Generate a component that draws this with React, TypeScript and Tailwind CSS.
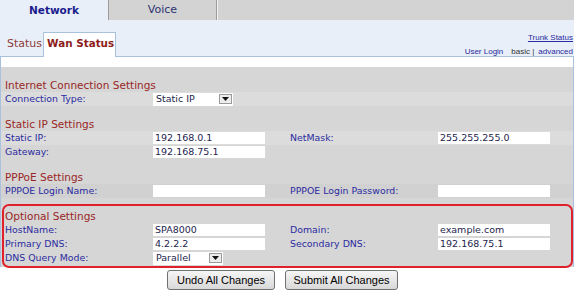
import React from "react";

const LABEL = "text-[9.4px] text-[#2b2ba0] leading-[14px] whitespace-nowrap";
const HEAD = "h-[13px] pl-[4px] text-[10.5px] leading-[13px] text-[#992626] whitespace-nowrap";

function Input({ value = "" }: { value?: string }) {
  return (
    <div className="w-[112px] h-[12px] bg-white text-[9.5px] leading-[12px] pl-[2px] text-[#1e1e4e] whitespace-nowrap overflow-hidden">
      {value}
    </div>
  );
}

function Select({ value, w }: { value: string; w: string }) {
  return (
    <div className={`${w} h-[13px] bg-white flex items-center justify-between pl-[3px] pr-[1px]`}>
      <span className="text-[9.5px] leading-[12px] text-[#1e1e4e]">{value}</span>
      <span className="w-[13px] h-[10px] bg-[#ececec] border border-[#9a9a9a] flex items-center justify-center">
        <svg width="7" height="4" viewBox="0 0 7 4">
          <path d="M0 0 H7 L3.5 4 Z" fill="#111" />
        </svg>
      </span>
    </div>
  );
}

function Field({ l1, c1, l2, c2 }: { l1: string; c1: React.ReactNode; l2?: string; c2?: React.ReactNode }) {
  return (
    <div className="grid grid-cols-[148px_137px_148px_1fr] pl-[4px] h-[14px] items-center">
      <span className={LABEL}>{l1}</span>
      <div>{c1}</div>
      <span className={LABEL}>{l2 ?? ""}</span>
      <div>{c2}</div>
    </div>
  );
}

function Blank() {
  return <div className="h-[12px]" />;
}

export default function App() {
  return (
    <div className="w-[575px] h-[291px] bg-white font-['DejaVu_Sans',sans-serif] relative overflow-hidden">
      {/* Top tabs */}
      <div className="flex h-[20px] w-[574px]">
        <div className="w-[108px] bg-[#e8eff8] text-center font-bold text-[10.5px] leading-[20px] text-[#1c1c8e]">
          Network
        </div>
        <div className="w-[1px] bg-[#9c9c9c]" />
        <div className="w-[107px] bg-[#d3d3d3] text-center text-[11px] leading-[20px] text-[#2c3470]">Voice</div>
        <div className="w-[1px] bg-[#9c9c9c]" />
        <div className="w-[1px] bg-[#f2f2f2]" />
        <div className="flex-1 bg-[#d3d3d3]" />
      </div>

      {/* Sub header */}
      <div className="flex items-end h-[37px] w-[574px] bg-[#e8eff8] border-b border-[#a9c1dc]">
        <div className="pl-[7px] pb-[6px] text-[11px] leading-[13px] text-[#8c3b3b]">Status</div>
        <div className="ml-[1px] -mb-px h-[25px] w-[73px] bg-white border border-b-0 border-[#a9c1dc] pl-[3px] pt-[4px] font-bold text-[10.4px] leading-[13px] text-[#8e1c1c]">
          Wan Status
        </div>
        <div className="ml-auto self-stretch flex flex-col items-end pt-[13px] pr-[1px] font-['Liberation_Sans',sans-serif] text-[8px] leading-[10px]">
          <span className="text-[#2a2aa0] underline">Trunk Status</span>
          <span className="mt-[4px] text-[#333]">
            <span className="text-[#2a2aa0]">User Login</span>
            <span className="ml-[8px]">basic |</span>
            <span className="ml-[4px] text-[#2a2aa0]">advanced</span>
          </span>
        </div>
      </div>

      {/* Content panel */}
      <div className="w-[574px] border-l border-r border-[#a9c1dc]">
        <div className="h-[10px] bg-white" />
        <div className="bg-[#d6d6d6] pb-[2px]">
          <Blank />
          <div className={HEAD}>Internet Connection Settings</div>
          <div className="bg-[#dcdcdc]">
            <Field l1="Connection Type:" c1={<Select value="Static IP" w="w-[80px]" />} />
          </div>
          <Blank />
          <div className={HEAD}>Static IP Settings</div>
          <div className="bg-[#dcdcdc]">
            <Field l1="Static IP:" c1={<Input value="192.168.0.1" />} l2="NetMask:" c2={<Input value="255.255.255.0" />} />
          </div>
          <Field l1="Gateway:" c1={<Input value="192.168.75.1" />} />
          <Blank />
          <div className={HEAD}>PPPoE Settings</div>
          <div className="bg-[#d1d1d1]">
            <Field l1="PPPOE Login Name:" c1={<Input />} l2="PPPOE Login Password:" c2={<Input />} />
          </div>
          <Blank />
          <div className={HEAD}>Optional Settings</div>
          <Field l1="HostName:" c1={<Input value="SPA8000" />} l2="Domain:" c2={<Input value="example.com" />} />
          <Field l1="Primary DNS:" c1={<Input value="4.2.2.2" />} l2="Secondary DNS:" c2={<Input value="192.168.75.1" />} />
          <Field l1="DNS Query Mode:" c1={<Select value="Parallel" w="w-[70px]" />} />
        </div>
      </div>

      {/* Buttons */}
      <div className="flex justify-center gap-[10px] pt-[3px] pr-[10px] font-['Liberation_Sans',sans-serif]">
        <button className="h-[20px] w-[108px] border border-[#707070] rounded-[3px] bg-gradient-to-b from-[#f6f6f6] to-[#d8d8d8] text-[11px] text-black">
          Undo All Changes
        </button>
        <button className="h-[20px] w-[113px] border border-[#707070] rounded-[3px] bg-gradient-to-b from-[#f6f6f6] to-[#d8d8d8] text-[11px] text-black">
          Submit All Changes
        </button>
      </div>

      {/* Red highlight annotation */}
      <div className="absolute left-[2px] top-[204px] w-[571px] h-[64px] border-2 border-[#e0202a] rounded-[7px] pointer-events-none" />
    </div>
  );
}
